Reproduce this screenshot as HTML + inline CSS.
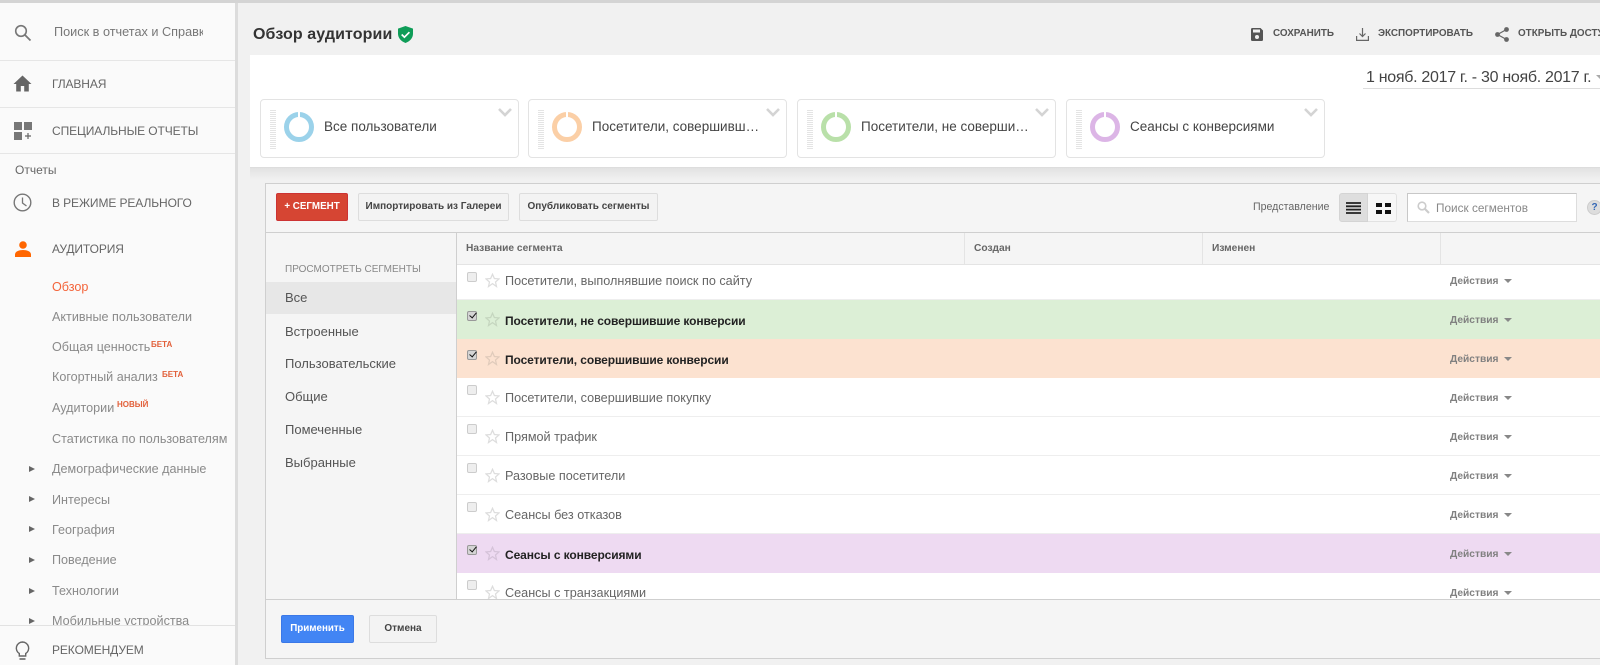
<!DOCTYPE html>
<html lang="ru"><head><meta charset="utf-8"><title>Обзор аудитории</title>
<style>
html,body{margin:0;padding:0;width:1600px;height:665px;overflow:hidden;background:#f1f1f1}
body{position:relative;font-family:"Liberation Sans",sans-serif;color:#444;filter:blur(.3px)}
.a,.t,svg{position:absolute}
.t{white-space:nowrap;line-height:16px;margin-top:-8px}
.side{font-size:12.6px;color:#777;left:52px}
.cap{font-size:12px;letter-spacing:-.1px;color:#666;left:52px}
.sup{position:absolute;font-size:8px;font-weight:bold;color:#e2603a;line-height:10px}
.tri{position:absolute;left:29px;width:0;height:0;border-left:6px solid #666;border-top:3.5px solid transparent;border-bottom:3.5px solid transparent}
.hr{position:absolute;left:0;width:235px;height:1px;background:#e6e6e6}
.card{position:absolute;top:99px;width:257px;height:57px;background:#fff;border:1px solid #e3e3e3;border-radius:4px}
.card .h{position:absolute;left:9px;top:10px;width:6px;height:40px;background:repeating-linear-gradient(#e4e4e4 0 1px,#fff 1px 2px)}
.card .r{position:absolute;left:23px;top:12px;width:20px;height:20px;border:5px solid;border-radius:50%}
.card .r::after{content:"";position:absolute;left:9px;top:-6px;width:2px;height:7px;background:#fff}
.card .n{position:absolute;left:63px;top:18px;font-size:13.5px;line-height:18px;color:#444;white-space:nowrap}
.card svg{left:237px;top:8px}
.btn{position:absolute;top:193px;height:26px;border:1px solid #ddd;border-radius:2px;background:#f3f3f3;font-size:10px;font-weight:bold;color:#444;text-align:center;line-height:26px;white-space:nowrap}
.nav{position:absolute;left:285px;font-size:13px;color:#555;line-height:16px;margin-top:-8px}
.row{position:absolute;left:457px;width:1143px;background:#fff;border-bottom:1px solid #eee;box-sizing:border-box}
.row .c{position:absolute;left:10px;top:7px;width:8px;height:8px;border:1px solid #ccc;border-radius:2px;background:#eee}
.row .k{position:absolute;left:10px;top:11px;width:8px;height:8px;border:1px solid #999;border-radius:2px;background:#d4d4d4}
.row .k::after{content:"";position:absolute;left:2.5px;top:-1px;width:3px;height:6px;border-right:1.8px solid #111;border-bottom:1.8px solid #111;transform:rotate(40deg)}
.row svg{left:28px;top:8px}
.row .x{position:absolute;left:48px;top:8px;font-size:12.65px;line-height:16px;color:#666;white-space:nowrap}
.row .b{font-weight:bold;color:#222;top:13px;font-size:12px;letter-spacing:-.1px}
.row .d{position:absolute;left:993px;top:9px;font-size:10.2px;font-weight:bold;color:#808080;line-height:16px}
.row .ar{position:absolute;left:1047px;top:14px;width:0;height:0;border-top:4px solid #888;border-left:4px solid transparent;border-right:4px solid transparent}
.tall .d{top:13px}.tall .ar{top:18px}.tall svg{top:12px}
.act{font-size:9.9px;font-weight:bold;color:#555;top:34px}
.th{font-size:10.2px;font-weight:bold;color:#666;top:249px}
</style></head><body>

<!-- top line -->
<div class="a" style="left:0;top:0;width:1600px;height:3px;background:#d4d4d4"></div>

<!-- sidebar -->
<div class="a" style="left:0;top:3px;width:235px;height:662px;background:#fafafa"></div>
<div class="a" style="left:235px;top:3px;width:3px;height:662px;background:#dcdcdc"></div>

<svg style="left:14px;top:24px" width="18" height="18" viewBox="0 0 18 18"><circle cx="7" cy="7" r="5.3" fill="none" stroke="#777" stroke-width="1.6"/><path d="M11 11l5.5 5.5" stroke="#777" stroke-width="1.8"/></svg>
<div class="t" style="left:54px;top:32px;width:149px;overflow:hidden;font-size:12.7px;color:#777">Поиск в отчетах и Справк</div>
<div class="hr" style="top:60px"></div>

<svg style="left:13px;top:75px" width="19" height="17" viewBox="0 0 19 17"><path d="M9.5 0.5L0.5 9h2.7v7.5h4.6V11h3.4v5.5h4.6V9h2.7z" fill="#666"/></svg>
<div class="t cap" style="top:84px">ГЛАВНАЯ</div>
<div class="hr" style="top:107px"></div>

<svg style="left:14px;top:122px" width="18" height="18" viewBox="0 0 18 18"><path d="M0 0h8v8H0zM10 0h8v8h-8zM0 10h8v8H0z" fill="#777"/><path d="M11 14h6M14 11v6" stroke="#666" stroke-width="1.2"/></svg>
<div class="t cap" style="top:131px">СПЕЦИАЛЬНЫЕ ОТЧЕТЫ</div>
<div class="hr" style="top:153px"></div>

<div class="t" style="left:15px;top:170px;font-size:12px;color:#666">Отчеты</div>
<svg style="left:13px;top:193px" width="19" height="19" viewBox="0 0 19 19"><circle cx="9.5" cy="9.5" r="8.3" fill="none" stroke="#777" stroke-width="1.4"/><path d="M9.5 4.5v5.5l4 3" fill="none" stroke="#777" stroke-width="1.3"/></svg>
<div class="t cap" style="top:203px">В РЕЖИМЕ РЕАЛЬНОГО</div>

<svg style="left:15px;top:241px" width="16" height="16" viewBox="0 0 16 16"><circle cx="8" cy="4" r="3.8" fill="#f60"/><path d="M0 16v-2.5C0 10.5 4 9 8 9s8 1.5 8 4.5V16z" fill="#f60"/></svg>
<div class="t cap" style="top:249px">АУДИТОРИЯ</div>

<div class="t side" style="top:287px;color:#f4643a">Обзор</div>
<div class="t side" style="top:317px;color:#8a8a8a">Активные пользователи</div>
<div class="t side" style="top:347px;color:#8a8a8a">Общая ценность</div><div class="sup" style="left:151px;top:340px">БЕТА</div>
<div class="t side" style="top:377px;color:#8a8a8a">Когортный анализ</div><div class="sup" style="left:162px;top:370px">БЕТА</div>
<div class="t side" style="top:408px;color:#8a8a8a">Аудитории</div><div class="sup" style="left:117px;top:400px">НОВЫЙ</div>
<div class="t side" style="top:439px;color:#8a8a8a">Статистика по пользователям</div>
<div class="tri" style="top:466px"></div><div class="t side" style="top:469px;color:#8a8a8a">Демографические данные</div>
<div class="tri" style="top:496px"></div><div class="t side" style="top:500px;color:#8a8a8a">Интересы</div>
<div class="tri" style="top:526px"></div><div class="t side" style="top:530px;color:#8a8a8a">География</div>
<div class="tri" style="top:557px"></div><div class="t side" style="top:560px;color:#8a8a8a">Поведение</div>
<div class="tri" style="top:588px"></div><div class="t side" style="top:591px;color:#8a8a8a">Технологии</div>
<div class="tri" style="top:618px"></div><div class="t side" style="top:621px;color:#8a8a8a">Мобильные устройства</div>
<div class="a" style="left:0;top:625px;width:235px;height:40px;background:#fafafa;border-top:1px solid #e2e2e2"></div>
<svg style="left:15px;top:641px" width="15" height="20" viewBox="0 0 15 20"><path d="M7.5 1a6.2 6.2 0 0 0-3.2 11.5V15h6.4v-2.5A6.2 6.2 0 0 0 7.5 1z" fill="none" stroke="#666" stroke-width="1.4"/><path d="M4.5 18h6" stroke="#666" stroke-width="1.6"/></svg>
<div class="t cap" style="top:650px">РЕКОМЕНДУЕМ</div>

<!-- header -->
<div class="t" style="left:253px;top:35px;font-size:16px;font-weight:bold;color:#333;letter-spacing:.1px">Обзор аудитории</div>
<svg style="left:398px;top:26px" width="15" height="17" viewBox="0 0 15 17"><path d="M7.5 0L0 2.6v5.2C0 12 3.2 15.5 7.5 17 11.8 15.5 15 12 15 7.8V2.6z" fill="#0f9d58"/><path d="M3.7 8.5l2.7 2.7 5-5" fill="none" stroke="#fff" stroke-width="1.7"/></svg>

<svg style="left:1251px;top:28px" width="12" height="13" viewBox="0 0 12 13"><path d="M0 1.2C0 .5.5 0 1.2 0H9.5L12 2.5v9.3c0 .7-.5 1.2-1.2 1.2H1.2C.5 13 0 12.5 0 11.8z" fill="#555"/><rect x="2" y="1.5" width="7" height="3" fill="#f1f1f1"/><circle cx="6" cy="9" r="2" fill="#f1f1f1"/></svg>
<div class="t act" style="left:1273px">СОХРАНИТЬ</div>
<svg style="left:1356px;top:28px" width="13" height="13" viewBox="0 0 13 13"><path d="M6.5 0v8M3.5 5.5l3 3 3-3M.6 8v4.4h11.800V8" fill="none" stroke="#666" stroke-width="1.2"/></svg>
<div class="t act" style="left:1378px">ЭКСПОРТИРОВАТЬ</div>
<svg style="left:1495px;top:27px" width="14" height="15" viewBox="0 0 14 15"><path d="M11.5 2.5L2.5 7.5l9 5" fill="none" stroke="#666" stroke-width="1.2"/><circle cx="11.5" cy="2.5" r="2.4" fill="#666"/><circle cx="2.5" cy="7.5" r="2.4" fill="#666"/><circle cx="11.5" cy="12.5" r="2.4" fill="#666"/></svg>
<div class="t act" style="left:1518px">ОТКРЫТЬ ДОСТУП</div>

<!-- white panel -->
<div class="a" style="left:250px;top:55px;width:1350px;height:112px;background:#fff;border-bottom:1px solid #ddd"></div>
<div class="a" style="left:250px;top:168px;width:1350px;height:12px;background:linear-gradient(#e2e2e2,#f1f1f1)"></div>

<div class="t" style="left:1366px;top:78px;font-size:16px;letter-spacing:-.3px;color:#444">1 нояб. 2017 г. - 30 нояб. 2017 г.</div>
<div class="a" style="left:1363px;top:88px;width:237px;height:1px;background:#ddd"></div>
<div class="a" style="left:1596px;top:75px;border-top:4px solid #aaa;border-left:4px solid transparent;border-right:4px solid transparent"></div>

<div class="card" style="left:260px"><div class="h"></div><div class="r" style="border-color:#9bd2ea"></div><div class="n">Все пользователи</div><svg width="14" height="9" viewBox="0 0 14 9"><path d="M1 1l6 6 6-6" fill="none" stroke="#d4d4d4" stroke-width="2.6"/></svg></div>
<div class="card" style="left:528px"><div class="h"></div><div class="r" style="border-color:#fbcfa6"></div><div class="n">Посетители, совершивш…</div><svg width="14" height="9" viewBox="0 0 14 9"><path d="M1 1l6 6 6-6" fill="none" stroke="#d4d4d4" stroke-width="2.6"/></svg></div>
<div class="card" style="left:797px"><div class="h"></div><div class="r" style="border-color:#b9e0a9"></div><div class="n">Посетители, не соверши…</div><svg width="14" height="9" viewBox="0 0 14 9"><path d="M1 1l6 6 6-6" fill="none" stroke="#d4d4d4" stroke-width="2.6"/></svg></div>
<div class="card" style="left:1066px"><div class="h"></div><div class="r" style="border-color:#dcb5e6"></div><div class="n">Сеансы с конверсиями</div><svg width="14" height="9" viewBox="0 0 14 9"><path d="M1 1l6 6 6-6" fill="none" stroke="#d4d4d4" stroke-width="2.6"/></svg></div>

<!-- segment box -->
<div class="a" style="left:265px;top:183px;width:1335px;height:474px;background:#f5f5f5;border:1px solid #cfcfcf;border-right:0"></div>
<div class="a" style="left:266px;top:232px;width:1334px;height:1px;background:#cfcfcf"></div>

<div class="btn" style="left:276px;width:70px;background:#d64533;border-color:#c33;color:#fff;font-size:9.8px">+ СЕГМЕНТ</div>
<div class="btn" style="left:358px;width:149px">Импортировать из Галереи</div>
<div class="btn" style="left:519px;width:137px">Опубликовать сегменты</div>

<div class="t" style="left:1253px;top:207px;font-size:10.6px;color:#666">Представление</div>
<div class="a" style="left:1339px;top:193px;width:29px;height:29px;background:#dedede;border:1px solid #d4d4d4;box-sizing:border-box;border-radius:3px 0 0 3px"></div>
<div class="a" style="left:1368px;top:193px;width:29px;height:29px;background:#f7f7f7;border:1px solid #e2e2e2;border-left:0;box-sizing:border-box;border-radius:0 3px 3px 0"></div>
<svg style="left:1346px;top:202px" width="15" height="12" viewBox="0 0 15 12"><path d="M0 1h15M0 4.3h15M0 7.6h15M0 11h15" stroke="#222" stroke-width="1.8"/></svg>
<svg style="left:1376px;top:203px" width="15" height="11" viewBox="0 0 15 11"><path d="M0 0h6v4H0zM9 0h6v4H9zM0 7h6v4H0zM9 7h6v4H9z" fill="#111"/></svg>
<div class="a" style="left:1407px;top:193px;width:170px;height:29px;background:#fff;border:1px solid #c8c8c8;border-bottom-color:#ddd;border-right-color:#ddd;box-sizing:border-box"></div>
<svg style="left:1417px;top:201px" width="13" height="13" viewBox="0 0 13 13"><circle cx="5" cy="5" r="3.8" fill="none" stroke="#ccc" stroke-width="1.6"/><path d="M8 8l4 4" stroke="#ccc" stroke-width="2.2"/></svg>
<div class="t" style="left:1436px;top:208px;font-size:11.8px;color:#888">Поиск сегментов</div>
<div class="a" style="left:1587px;top:200px;width:13px;height:13px;border-radius:50%;background:#ddd;border:1px solid #ccc;font-size:10px;font-weight:bold;color:#3367b5;text-align:center;line-height:13px">?</div>

<!-- left nav -->
<div class="a" style="left:456px;top:233px;width:1px;height:366px;background:#cfcfcf"></div>
<div class="t" style="left:285px;top:270px;font-size:10px;color:#888">ПРОСМОТРЕТЬ СЕГМЕНТЫ</div>
<div class="a" style="left:266px;top:282px;width:190px;height:32px;background:#e7e7e7"></div>
<div class="nav" style="top:298px">Все</div>
<div class="nav" style="top:331.5px">Встроенные</div>
<div class="nav" style="top:364px">Пользовательские</div>
<div class="nav" style="top:396.5px">Общие</div>
<div class="nav" style="top:429.5px">Помеченные</div>
<div class="nav" style="top:462.5px">Выбранные</div>

<!-- table head -->
<div class="a" style="left:457px;top:233px;width:1143px;height:32px;border-bottom:1px solid #e4e4e4;box-sizing:border-box"></div>
<div class="t th" style="left:466px">Название сегмента</div>
<div class="a" style="left:964px;top:233px;width:1px;height:32px;background:#e4e4e4"></div>
<div class="t th" style="left:974px">Создан</div>
<div class="a" style="left:1202px;top:233px;width:1px;height:32px;background:#e4e4e4"></div>
<div class="t th" style="left:1212px">Изменен</div>
<div class="a" style="left:1440px;top:233px;width:1px;height:32px;background:#e4e4e4"></div>

<!-- rows -->
<div class="row" style="top:265px;height:35px"><div class="c"></div><svg width="15" height="15" viewBox="0 0 24 24"><path d="M12 2l3 6.8 7.3.7-5.5 4.9 1.6 7.2L12 17l-6.4 4.6 1.6-7.2L1.700 9.500 9 8.800z" fill="none" stroke="#ddd" stroke-width="2"/></svg><div class="x">Посетители, выполнявшие поиск по сайту</div><div class="d">Действия</div><div class="ar"></div></div>
<div class="row tall" style="top:300px;height:39px;background:#dcefd6;border:0"><div class="k"></div><svg width="15" height="15" viewBox="0 0 24 24"><path d="M12 2l3 6.8 7.3.7-5.5 4.9 1.6 7.2L12 17l-6.4 4.6 1.6-7.2L1.700 9.500 9 8.800z" fill="none" stroke="#c5d6bf" stroke-width="2"/></svg><div class="x b">Посетители, не совершившие конверсии</div><div class="d">Действия</div><div class="ar"></div></div>
<div class="row tall" style="top:339px;height:39px;background:#fce2d0;border:0"><div class="k"></div><svg width="15" height="15" viewBox="0 0 24 24"><path d="M12 2l3 6.8 7.3.7-5.5 4.9 1.6 7.2L12 17l-6.4 4.6 1.6-7.2L1.700 9.500 9 8.800z" fill="none" stroke="#e0cbbb" stroke-width="2"/></svg><div class="x b">Посетители, совершившие конверсии</div><div class="d">Действия</div><div class="ar"></div></div>
<div class="row tall" style="top:378px;height:39px"><div class="c"></div><svg width="15" height="15" viewBox="0 0 24 24"><path d="M12 2l3 6.8 7.3.7-5.5 4.9 1.6 7.2L12 17l-6.4 4.6 1.6-7.2L1.700 9.500 9 8.800z" fill="none" stroke="#ddd" stroke-width="2"/></svg><div class="x" style="top:12px">Посетители, совершившие покупку</div><div class="d">Действия</div><div class="ar"></div></div>
<div class="row tall" style="top:417px;height:39px"><div class="c"></div><svg width="15" height="15" viewBox="0 0 24 24"><path d="M12 2l3 6.8 7.3.7-5.5 4.9 1.6 7.2L12 17l-6.4 4.6 1.6-7.2L1.700 9.500 9 8.800z" fill="none" stroke="#ddd" stroke-width="2"/></svg><div class="x" style="top:12px">Прямой трафик</div><div class="d">Действия</div><div class="ar"></div></div>
<div class="row tall" style="top:456px;height:39px"><div class="c"></div><svg width="15" height="15" viewBox="0 0 24 24"><path d="M12 2l3 6.8 7.3.7-5.5 4.9 1.6 7.2L12 17l-6.4 4.6 1.6-7.2L1.700 9.500 9 8.800z" fill="none" stroke="#ddd" stroke-width="2"/></svg><div class="x" style="top:12px">Разовые посетители</div><div class="d">Действия</div><div class="ar"></div></div>
<div class="row tall" style="top:495px;height:39px"><div class="c"></div><svg width="15" height="15" viewBox="0 0 24 24"><path d="M12 2l3 6.8 7.3.7-5.5 4.9 1.6 7.2L12 17l-6.4 4.6 1.6-7.2L1.700 9.500 9 8.800z" fill="none" stroke="#ddd" stroke-width="2"/></svg><div class="x" style="top:12px">Сеансы без отказов</div><div class="d">Действия</div><div class="ar"></div></div>
<div class="row tall" style="top:534px;height:39px;background:#eedaf2;border:0"><div class="k"></div><svg width="15" height="15" viewBox="0 0 24 24"><path d="M12 2l3 6.8 7.3.7-5.5 4.9 1.6 7.2L12 17l-6.4 4.6 1.6-7.2L1.700 9.500 9 8.800z" fill="none" stroke="#d5c3d9" stroke-width="2"/></svg><div class="x b">Сеансы с конверсиями</div><div class="d">Действия</div><div class="ar"></div></div>
<div class="row tall" style="top:573px;height:26px;overflow:hidden;border:0"><div class="c"></div><svg width="15" height="15" viewBox="0 0 24 24"><path d="M12 2l3 6.8 7.3.7-5.5 4.9 1.6 7.2L12 17l-6.4 4.6 1.6-7.2L1.700 9.500 9 8.800z" fill="none" stroke="#ddd" stroke-width="2"/></svg><div class="x" style="top:12px">Сеансы с транзакциями</div><div class="d">Действия</div><div class="ar"></div></div>

<!-- footer -->
<div class="a" style="left:266px;top:599px;width:1334px;height:1px;background:#cfcfcf"></div>
<div class="btn" style="left:281px;top:615px;width:71px;background:#4285f4;border-color:#3b78e7;color:#fff;font-size:9.8px">Применить</div>
<div class="btn" style="left:369px;top:615px;width:66px">Отмена</div>
</body></html>
